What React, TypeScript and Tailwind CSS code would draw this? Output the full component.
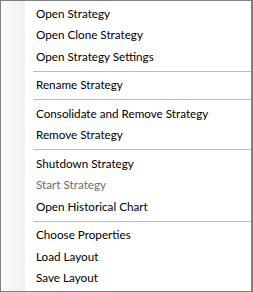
const groups: { label: string; disabled?: boolean }[][] = [
  [{ label: 'Open Strategy' }, { label: 'Open Clone Strategy' }, { label: 'Open Strategy Settings' }],
  [{ label: 'Rename Strategy' }],
  [{ label: 'Consolidate and Remove Strategy' }, { label: 'Remove Strategy' }],
  [{ label: 'Shutdown Strategy' }, { label: 'Start Strategy', disabled: true }, { label: 'Open Historical Chart' }],
  [{ label: 'Choose Properties' }, { label: 'Load Layout' }, { label: 'Save Layout' }],
];

export default function App() {
  return (
    <div className="w-[253px] h-[292px] flex bg-white border-t border-l border-r-2 border-b border-[#808080] font-['Lato',sans-serif] text-[11.7px] text-black">
      <div className="w-[24px] shrink-0 bg-gradient-to-r from-[#fafafa] to-[#f0f0f0]" />
      <div className="flex-1 flex flex-col pt-[2px]">
        {groups.map((group, gi) => (
          <div key={gi} className="flex flex-col">
            {gi > 0 && (
              <div className="h-[7px] flex items-center ml-[8px]">
                <div className="h-px w-full bg-[#bdbdbd]" />
              </div>
            )}
            {group.map((item) => (
              <div
                key={item.label}
                className={`h-[21.5px] flex items-center pl-[11px] whitespace-nowrap ${
                  item.disabled ? 'text-[#6d6d6d]' : ''
                }`}
              >
                {item.label}
              </div>
            ))}
          </div>
        ))}
      </div>
    </div>
  );
}
